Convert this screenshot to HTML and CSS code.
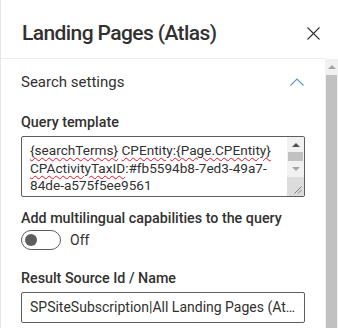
FILE: index.html
```html
<!DOCTYPE html>
<html lang="en">
<head>
    <meta charset="UTF-8">
    <title>Landing Pages (Atlas)</title>
    <link rel="stylesheet" href="styles.css">
</head>
<body>
    <div class="panel">
        <div class="header">
            <h1 class="title">Landing Pages (Atlas)</h1>
            <span class="close">
                <svg width="13" height="13" viewBox="0 0 13 13"><path d="M0.5 0.5 L12.5 12.5 M12.5 0.5 L0.5 12.5" stroke="#323130" stroke-width="1.1" fill="none"/></svg>
            </span>
        </div>
        <div class="body">
            <div class="content">
                <div class="group-head">
                    <span>Search settings</span>
                    <svg class="chevron" width="14" height="8" viewBox="0 0 14 8"><path d="M0.5 7.5 L7 1 L13.5 7.5" stroke="#5f94c4" stroke-width="1.1" fill="none"/></svg>
                </div>
                <label class="label">Query template</label>
                <div class="textarea">
                    <div class="ta-text">
                        <span class="sq">{searchTerms}</span> <span class="sq">CPEntity:{Page.CPEntity}</span><br>
                        <span class="sq">CPActivityTaxID</span>:#fb5594b8-7ed3-49a7-<br>
                        84de-a575f5ee9561
                    </div>
                    <div class="ta-scroll">
                        <span class="arr up"></span>
                        <span class="ta-thumb"></span>
                        <span class="arr down"></span>
                        <span class="ta-corner">
                            <svg width="9" height="9" viewBox="0 0 9 9"><path d="M8.5 1.5 L1.5 8.5 M8.5 5 L5 8.5" stroke="#808080" stroke-width="1" fill="none"/></svg>
                        </span>
                    </div>
                </div>
                <label class="label toggle-label">Add multilingual capabilities to the query</label>
                <div class="toggle-row">
                    <span class="toggle"><span class="knob"></span></span>
                    <span class="toggle-text">Off</span>
                </div>
                <label class="label source-label">Result Source Id / Name</label>
                <div class="input">SPSiteSubscription|All Landing Pages (Atlas)</div>
            </div>
            <div class="scrollbar">
                <span class="sb-up"></span>
                <span class="sb-thumb"></span>
            </div>
        </div>
    </div>
</body>
</html>
```
FILE: styles.css
```css
*{
    padding: 0;
    margin: 0;
    box-sizing: border-box;
}
body{
    width: 338px;
    height: 328px;
    overflow: hidden;
    background: #ffffff;
    font-family: Roboto, "Open Sans", sans-serif;
    color: #323130;
}
.panel{
    height: 328px;
    border-left: 1px solid #e6e6e6;
    display: flex;
    flex-direction: column;
}
.header{
    height: 59px;
    flex: none;
    display: flex;
    align-items: center;
    justify-content: space-between;
    padding: 8px 5px 0 21px;
    border-bottom: 1px solid #edebe9;
    margin-right: 13px;
}
.title{
    font-size: 21px;
    font-weight: 500;
    letter-spacing: -0.6px;
    color: #323130;
}
.close{
    display: flex;
}
.body{
    flex: 1;
    display: flex;
    min-height: 0;
}
.content{
    flex: 1;
    min-width: 0;
    padding: 0 20px 0 20px;
}
.group-head{
    height: 46px;
    display: flex;
    align-items: center;
    justify-content: space-between;
    font-size: 15px;
}
.chevron{
    margin-right: 1px;
}
.label{
    display: block;
    font-size: 14.3px;
    font-weight: 500;
    margin-top: 7px;
    line-height: 20px;
    white-space: nowrap;
}
.textarea{
    margin-top: 4px;
    height: 61px;
    border: 1px solid #605e5c;
    border-radius: 2px;
    display: flex;
    overflow: hidden;
}
.ta-text{
    flex: 1;
    min-width: 0;
    overflow: hidden;
    padding: 5px 0 0 8px;
    font-size: 13.6px;
    line-height: 17.5px;
    white-space: nowrap;
}
.sq{
    text-decoration: underline wavy #e81123;
    text-decoration-thickness: 1px;
    text-underline-offset: 2px;
}
.ta-scroll{
    width: 17px;
    flex: none;
    background: #f1f1f1;
    display: flex;
    flex-direction: column;
    align-items: center;
}
.arr{
    width: 0;
    height: 0;
    border-left: 4px solid transparent;
    border-right: 4px solid transparent;
}
.arr.up{
    margin-top: 6px;
    border-bottom: 4px solid #505050;
}
.arr.down{
    margin-top: 6px;
    border-top: 4px solid #a3a3a3;
}
.ta-thumb{
    margin-top: 5px;
    width: 15px;
    height: 9px;
    background: #c1c1c1;
}
.ta-corner{
    margin-top: auto;
    width: 17px;
    height: 19px;
    background: #dcdcdc;
    display: flex;
    align-items: flex-end;
    justify-content: flex-end;
    padding: 0 2px 2px 0;
}
.toggle-label{
    margin-top: 11px;
}
.toggle-row{
    display: flex;
    align-items: center;
    margin-top: 2px;
    height: 20px;
}
.toggle{
    width: 40px;
    height: 20px;
    border: 1px solid #605e5c;
    border-radius: 10px;
    display: flex;
    align-items: center;
    padding-left: 3px;
}
.knob{
    width: 12px;
    height: 12px;
    border-radius: 50%;
    background: #605e5c;
}
.toggle-text{
    margin-left: 9px;
    font-size: 14px;
}
.source-label{
    margin-top: 18px;
}
.input{
    margin-top: 4px;
    height: 31px;
    border: 1px solid #605e5c;
    border-radius: 2px;
    padding: 0 8px;
    font-size: 14px;
    line-height: 29px;
    white-space: nowrap;
    overflow: hidden;
    text-overflow: ellipsis;
}
.scrollbar{
    width: 13px;
    flex: none;
    background: #f1f1f1;
    display: flex;
    flex-direction: column;
    align-items: center;
}
.sb-up{
    margin-top: 6px;
    width: 0;
    height: 0;
    border-left: 4px solid transparent;
    border-right: 4px solid transparent;
    border-bottom: 4px solid #a3a3a3;
}
.sb-thumb{
    margin-top: 6px;
    width: 11px;
    flex: 1;
    background: #c1c1c1;
}
```
